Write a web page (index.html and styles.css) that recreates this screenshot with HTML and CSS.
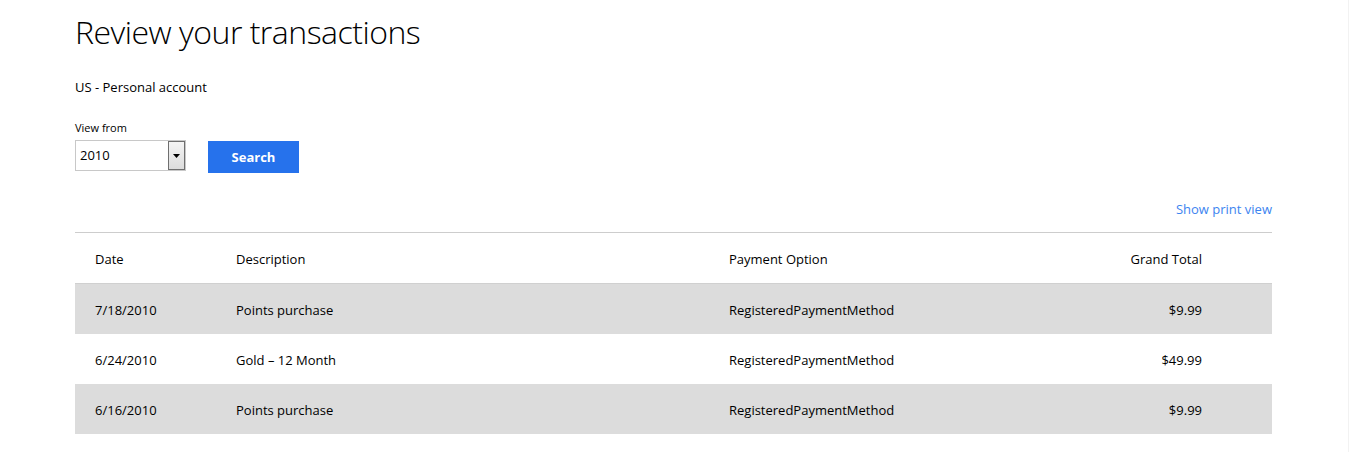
FILE: index.html
```html
<!DOCTYPE html>
<html lang="en">
<head>
<meta charset="utf-8">
<title>Review your transactions</title>
<link rel="stylesheet" href="styles.css">
</head>
<body>
<div class="page">
  <main class="content">
    <h1 class="title">Review your transactions</h1>
    <p class="account">US - Personal account</p>
    <form class="filter">
      <label class="filter-label" for="year">View from</label>
      <div class="filter-row">
        <div class="select">
          <span class="select-value">2010</span>
          <span class="select-btn"><svg width="7" height="4" viewBox="0 0 7 4"><path d="M0 0h7L3.5 4z" fill="#000"/></svg></span>
        </div>
        <button type="button" class="btn-search">Search</button>
      </div>
    </form>
    <div class="print-row"><a class="print-link" href="#">Show print view</a></div>
    <div class="table">
      <div class="row head">
        <div class="cell">Date</div>
        <div class="cell">Description</div>
        <div class="cell">Payment Option</div>
        <div class="cell total">Grand Total</div>
      </div>
      <div class="row shaded">
        <div class="cell">7/18/2010</div>
        <div class="cell">Points purchase</div>
        <div class="cell">RegisteredPaymentMethod</div>
        <div class="cell total">$9.99</div>
      </div>
      <div class="row">
        <div class="cell">6/24/2010</div>
        <div class="cell">Gold – 12 Month</div>
        <div class="cell">RegisteredPaymentMethod</div>
        <div class="cell total">$49.99</div>
      </div>
      <div class="row shaded">
        <div class="cell">6/16/2010</div>
        <div class="cell">Points purchase</div>
        <div class="cell">RegisteredPaymentMethod</div>
        <div class="cell total">$9.99</div>
      </div>
    </div>
  </main>
</div>
</body>
</html>
```

FILE: styles.css
```css
* { box-sizing: border-box; }
html, body { margin: 0; padding: 0; background: #fff; }
body {
  font-family: "Open Sans", "Noto Sans", sans-serif;
  color: #000;
  font-size: 14px;
}
.page {
  min-height: 452px;
  border-right: 1px solid #f2f2f2;
  width: 1349px;
}
.content {
  width: 1197px;
  margin-left: 75px;
  padding-top: 10px;
}
.title {
  margin: 0;
  font-weight: 300;
  font-size: 32px;
  line-height: 44px;
  letter-spacing: -0.5px;
}
.account {
  margin: 24px 0 0;
  font-size: 13px;
  line-height: 18px;
}
.filter { margin-top: 25px; }
.filter-label {
  display: block;
  font-size: 11px;
  line-height: 14px;
}
.filter-row {
  display: flex;
  align-items: flex-start;
  gap: 22px;
  margin-top: 5px;
}
.select {
  width: 111px;
  height: 31px;
  border: 1px solid #c8c8c8;
  display: flex;
  align-items: stretch;
}
.select-value {
  flex: 1;
  padding-left: 4px;
  line-height: 29px;
  font-size: 13px;
}
.select-btn {
  width: 17px;
  margin: 0;
  border: 1px solid #6f6f6f;
  background: linear-gradient(#f4f4f4, #dcdcdc);
  display: flex;
  align-items: center;
  justify-content: center;
}
.btn-search {
  width: 91px;
  height: 32px;
  margin-top: 1px;
  border: 0;
  background: #2672ec;
  color: #fff;
  font-family: inherit;
  font-weight: 700;
  font-size: 13px;
  padding: 0;
}
.print-row {
  display: flex;
  justify-content: flex-end;
  margin-top: 27px;
}
.print-link {
  color: #3c84f0;
  text-decoration: none;
  font-size: 13px;
  line-height: 18px;
}
.table {
  margin-top: 14px;
  border-top: 1px solid #cdcdcd;
}
.row {
  display: grid;
  grid-template-columns: 141px 493px 1fr 200px;
  height: 50px;
  align-items: center;
  font-size: 13px;
}
.row.head { height: 51px; border-bottom: 1px solid #d0d0d0; }
.row.shaded { background: #dcdcdc; }
.cell { padding-left: 20px; padding-top: 2px; white-space: nowrap; }
.cell.total { text-align: right; padding-left: 0; padding-right: 70px; }
```
